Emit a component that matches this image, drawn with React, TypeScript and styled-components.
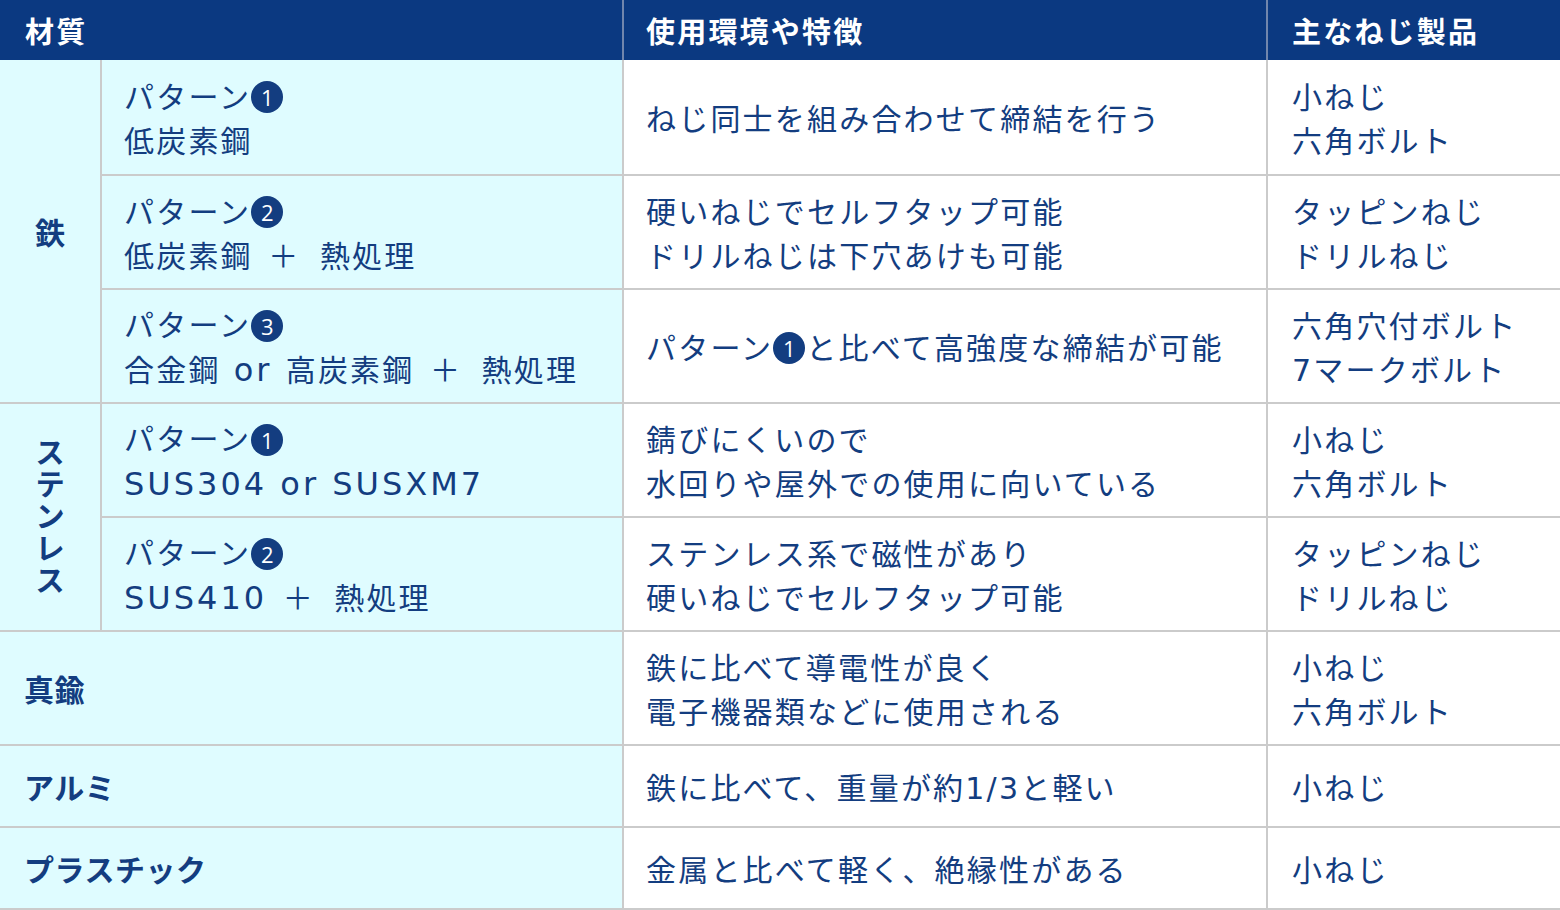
import React from "react";
import styled, { createGlobalStyle } from "styled-components";

const Global = createGlobalStyle`
  html, body { margin: 0; padding: 0; background: #ffffff; }
  body { font-family: "Noto Sans CJK JP", "Noto Sans", sans-serif; }
`;

const NAVY = "#0b3981";
const TEXT = "#133d80";
const CYAN = "#dffcff";
const LINE = "#cbcbcb";

const Table = styled.div`
  width: 1560px;
`;

const Header = styled.div`
  display: grid;
  grid-template-columns: 622px 642px 292px;
  column-gap: 2px;
  height: 60px;
  background: #7186ad;
`;

const HeadCell = styled.div<{ $pad?: number }>`
  background: ${NAVY};
  color: #ffffff;
  font-size: 29px;
  font-weight: 700;
  letter-spacing: 2.2px;
  display: flex;
  align-items: center;
  padding-left: ${(p) => p.$pad ?? 22}px;
`;

const Body = styled.div`
  display: grid;
  grid-template-columns: 100px 520px 642px 292px;
  grid-template-rows: 114px 112px 112px 112px 112px 112px 80px 80px;
  gap: 2px;
  background: ${LINE};
  padding-bottom: 2px;
`;

const Cell = styled.div<{ $bg?: string; $pad?: number }>`
  background: ${(p) => p.$bg ?? "#ffffff"};
  color: ${TEXT};
  font-family: "DejaVu Sans", "Noto Sans CJK JP", sans-serif;
  font-size: 30px;
  line-height: 44px;
  letter-spacing: 2.2px;
  display: flex;
  flex-direction: column;
  justify-content: center;
  padding-left: ${(p) => p.$pad ?? 22}px;
  padding-top: 5px;
  white-space: nowrap;
`;

const GroupCell = styled.div<{ $span: number; $vertical?: boolean }>`
  grid-row: span ${(p) => p.$span};
  background: ${CYAN};
  color: ${TEXT};
  font-size: 30px;
  font-weight: 700;
  display: flex;
  align-items: center;
  justify-content: center;
  ${(p) =>
    p.$vertical
      ? `writing-mode: vertical-rl; letter-spacing: 2px; line-height: 1;`
      : `letter-spacing: 0;`}
`;

const LabelCell = styled.div`
  grid-column: span 2;
  background: ${CYAN};
  color: ${TEXT};
  font-size: 30px;
  font-weight: 700;
  letter-spacing: 0.5px;
  display: flex;
  align-items: center;
  padding-left: 24px;
`;

const Latin = styled.span`
  font-size: 32px;
  letter-spacing: 3px;
`;

const Plus = styled.span`
  letter-spacing: 6px;
`;

const Circle = styled.span`
  display: inline-flex;
  align-items: center;
  justify-content: center;
  width: 32px;
  height: 32px;
  border-radius: 50%;
  background: ${TEXT};
  color: #ffffff;
  font-family: "Open Sans", "Noto Sans", sans-serif;
  font-size: 22px;
  font-weight: 400;
  line-height: 1;
  letter-spacing: 0;
  vertical-align: middle;
  margin: -4px 1px 0 0;
`;

const Line = styled.span`
  display: block;
`;

const Lines = ({ items }: { items: React.ReactNode[] }) => (
  <>
    {items.map((t, i) => (
      <Line key={i}>{t}</Line>
    ))}
  </>
);

const Num = ({ n }: { n: number }) => <Circle>{n}</Circle>;
const PlusSep = () => <Plus> ＋ </Plus>;

export default function App() {
  return (
    <>
      <Global />
      <Table>
        <Header>
          <HeadCell $pad={25}>材質</HeadCell>
          <HeadCell>使用環境や特徴</HeadCell>
          <HeadCell $pad={24}>主なねじ製品</HeadCell>
        </Header>
        <Body>
          <GroupCell $span={3}>鉄</GroupCell>
          <Cell $bg={CYAN}>
            <Lines items={[<>パターン<Num n={1} /></>, "低炭素鋼"]} />
          </Cell>
          <Cell>
            <Lines items={["ねじ同士を組み合わせて締結を行う"]} />
          </Cell>
          <Cell $pad={24}>
            <Lines items={["小ねじ", "六角ボルト"]} />
          </Cell>

          <Cell $bg={CYAN}>
            <Lines items={[<>パターン<Num n={2} /></>, <>低炭素鋼<PlusSep />熱処理</>]} />
          </Cell>
          <Cell>
            <Lines items={["硬いねじでセルフタップ可能", "ドリルねじは下穴あけも可能"]} />
          </Cell>
          <Cell $pad={24}>
            <Lines items={["タッピンねじ", "ドリルねじ"]} />
          </Cell>

          <Cell $bg={CYAN}>
            <Lines
              items={[
                <>パターン<Num n={3} /></>,
                <>合金鋼<Latin> or </Latin>高炭素鋼<PlusSep />熱処理</>,
              ]}
            />
          </Cell>
          <Cell>
            <Lines items={[<>パターン<Num n={1} />と比べて高強度な締結が可能</>]} />
          </Cell>
          <Cell $pad={24}>
            <Lines items={["六角穴付ボルト", "7マークボルト"]} />
          </Cell>

          <GroupCell $span={2} $vertical>
            ステンレス
          </GroupCell>
          <Cell $bg={CYAN}>
            <Lines items={[<>パターン<Num n={1} /></>, <Latin>SUS304 or SUSXM7</Latin>]} />
          </Cell>
          <Cell>
            <Lines items={["錆びにくいので", "水回りや屋外での使用に向いている"]} />
          </Cell>
          <Cell $pad={24}>
            <Lines items={["小ねじ", "六角ボルト"]} />
          </Cell>

          <Cell $bg={CYAN}>
            <Lines items={[<>パターン<Num n={2} /></>, <><Latin>SUS410</Latin><PlusSep />熱処理</>]} />
          </Cell>
          <Cell>
            <Lines items={["ステンレス系で磁性があり", "硬いねじでセルフタップ可能"]} />
          </Cell>
          <Cell $pad={24}>
            <Lines items={["タッピンねじ", "ドリルねじ"]} />
          </Cell>

          <LabelCell>真鍮</LabelCell>
          <Cell>
            <Lines items={["鉄に比べて導電性が良く", "電子機器類などに使用される"]} />
          </Cell>
          <Cell $pad={24}>
            <Lines items={["小ねじ", "六角ボルト"]} />
          </Cell>

          <LabelCell>アルミ</LabelCell>
          <Cell>
            <Lines items={["鉄に比べて、重量が約1/3と軽い"]} />
          </Cell>
          <Cell $pad={24}>
            <Lines items={["小ねじ"]} />
          </Cell>

          <LabelCell>プラスチック</LabelCell>
          <Cell>
            <Lines items={["金属と比べて軽く、絶縁性がある"]} />
          </Cell>
          <Cell $pad={24}>
            <Lines items={["小ねじ"]} />
          </Cell>
        </Body>
      </Table>
    </>
  );
}
